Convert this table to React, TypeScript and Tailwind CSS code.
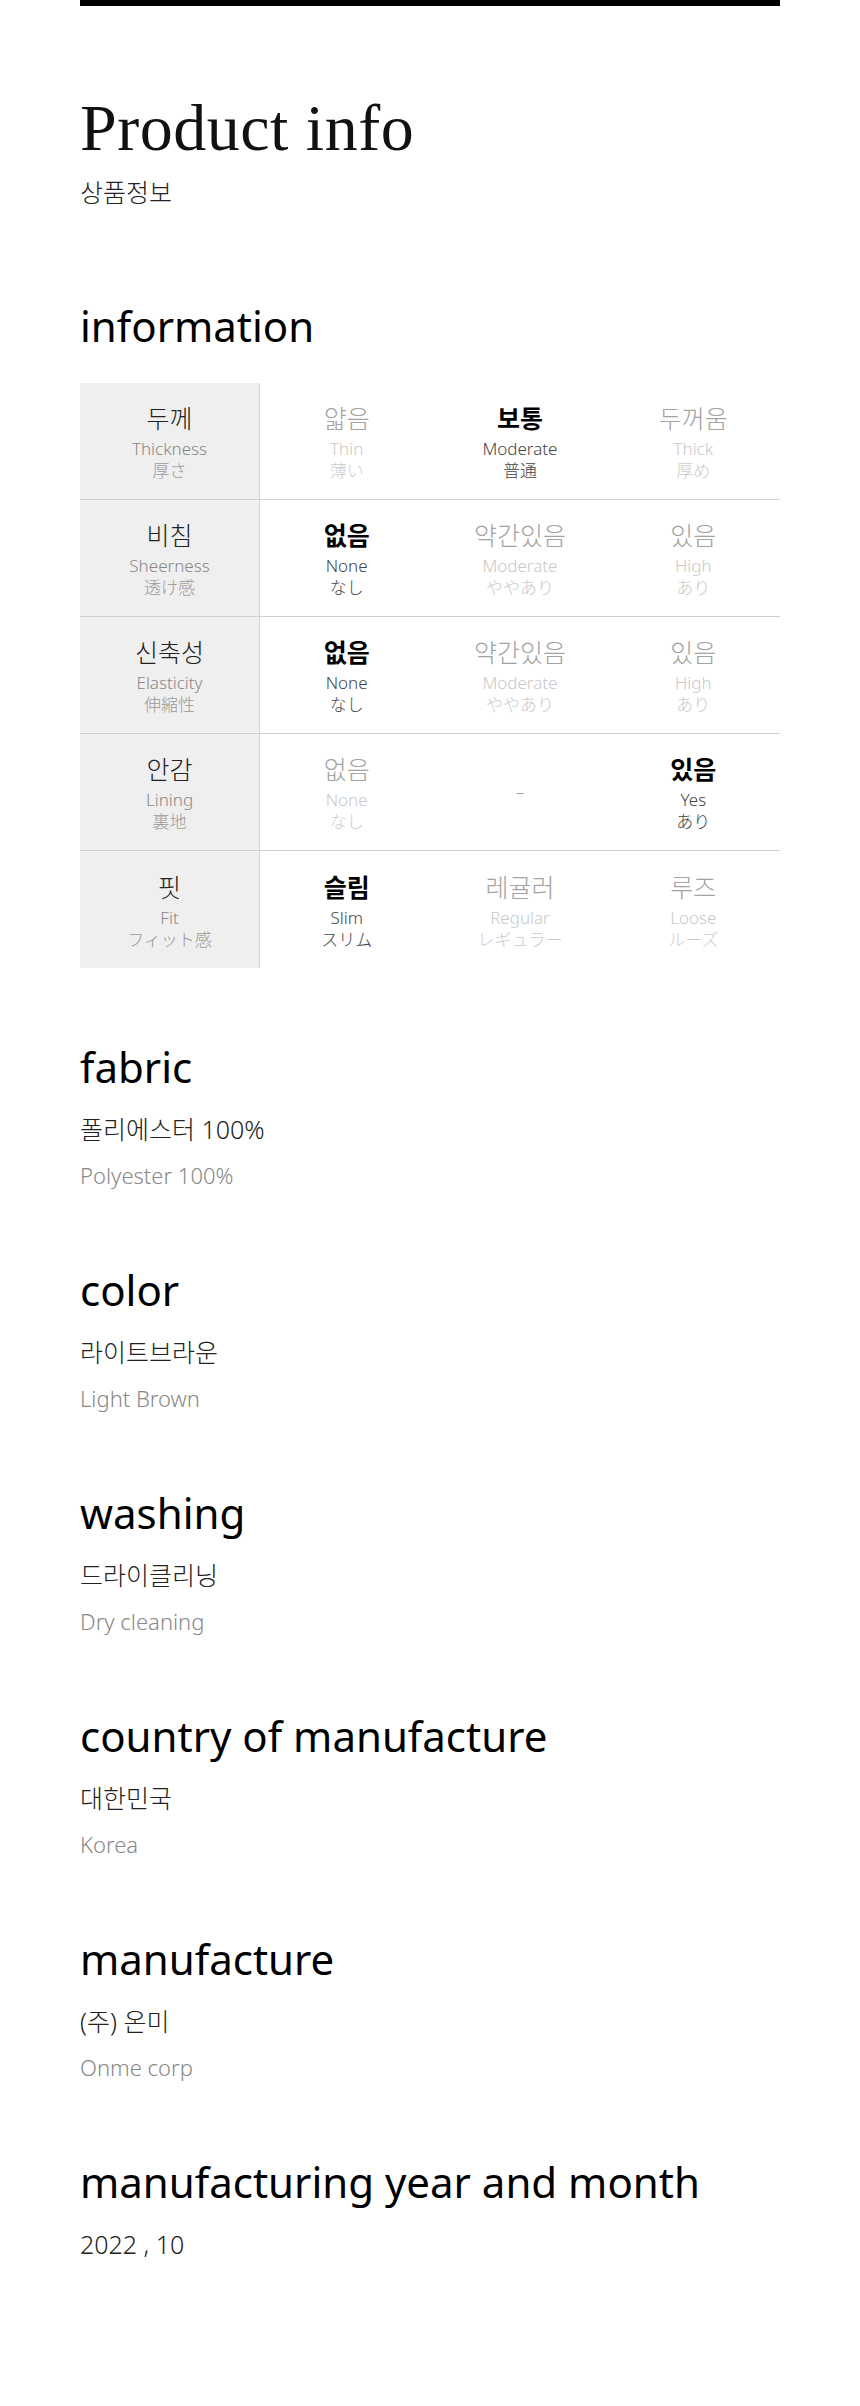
import React from "react"

// 상품정보 — 두께/비침/신축성/안감/핏 표 + 소재/색상/세탁/제조 정보.

type Option = { ko: string; en: string; ja: string; on?: boolean } | null

interface SpecRow {
  ko: string
  en: string
  ja: string
  options: Option[]
}

const SANS = "font-['Noto_Sans','Noto_Sans_CJK_KR','Noto_Sans_CJK_JP',sans-serif]"
const JA = "font-['Noto_Sans','Noto_Sans_CJK_JP',sans-serif]"

const ROWS: SpecRow[] = [
  {
    ko: "두께",
    en: "Thickness",
    ja: "厚さ",
    options: [
      { ko: "얇음", en: "Thin", ja: "薄い" },
      { ko: "보통", en: "Moderate", ja: "普通", on: true },
      { ko: "두꺼움", en: "Thick", ja: "厚め" },
    ],
  },
  {
    ko: "비침",
    en: "Sheerness",
    ja: "透け感",
    options: [
      { ko: "없음", en: "None", ja: "なし", on: true },
      { ko: "약간있음", en: "Moderate", ja: "ややあり" },
      { ko: "있음", en: "High", ja: "あり" },
    ],
  },
  {
    ko: "신축성",
    en: "Elasticity",
    ja: "伸縮性",
    options: [
      { ko: "없음", en: "None", ja: "なし", on: true },
      { ko: "약간있음", en: "Moderate", ja: "ややあり" },
      { ko: "있음", en: "High", ja: "あり" },
    ],
  },
  {
    ko: "안감",
    en: "Lining",
    ja: "裏地",
    options: [
      { ko: "없음", en: "None", ja: "なし" },
      null,
      { ko: "있음", en: "Yes", ja: "あり", on: true },
    ],
  },
  {
    ko: "핏",
    en: "Fit",
    ja: "フィット感",
    options: [
      { ko: "슬림", en: "Slim", ja: "スリム", on: true },
      { ko: "레귤러", en: "Regular", ja: "レギュラー" },
      { ko: "루즈", en: "Loose", ja: "ルーズ" },
    ],
  },
]

const DETAILS: { title: string; ko: string; en?: string }[] = [
  { title: "fabric", ko: "폴리에스터 100%", en: "Polyester 100%" },
  { title: "color", ko: "라이트브라운", en: "Light Brown" },
  { title: "washing", ko: "드라이클리닝", en: "Dry cleaning" },
  { title: "country of manufacture", ko: "대한민국", en: "Korea" },
  { title: "manufacture", ko: "(주) 온미", en: "Onme corp" },
  { title: "manufacturing year and month", ko: "2022 , 10" },
]

function Cell({ ko, en, ja, tone }: { ko: string; en: string; ja: string; tone: "head" | "on" | "off" }) {
  const koCls =
    tone === "on" ? "font-bold text-black" : tone === "head" ? "font-light text-[#222]" : "font-light text-[#a3a3a3]"
  const enCls = tone === "on" ? "text-[#444]" : tone === "head" ? "text-[#888]" : "text-[#c8c8c8]"
  const jaCls = tone === "on" ? "text-[#444]" : tone === "head" ? "text-[#999]" : "text-[#cccccc]"
  return (
    <div className="flex flex-col items-center text-center">
      <p className={`text-[25px] leading-[36px] ${koCls}`}>{ko}</p>
      <p className={`mt-[2px] text-[17px] font-light leading-[22px] ${enCls}`}>{en}</p>
      <p className={`${JA} text-[17px] font-light leading-[22px] ${jaCls}`}>{ja}</p>
    </div>
  )
}

export default function App() {
  return (
    <div className={`${SANS} min-h-[2406px] bg-white px-[80px] text-black`}>
      <div className="h-[6px] bg-black" />

      <h1 className="mt-[89px] font-['Liberation_Serif',serif] text-[66px] font-normal leading-none tracking-[0.5px] text-[#111]">
        Product info
      </h1>
      <p className="mt-[13px] text-[25px] font-light leading-[36px] text-[#222]">상품정보</p>

      <h2 className="mt-[91px] text-[42px] font-normal leading-[50px]">information</h2>

      <div className="mt-[32px]">
        {ROWS.map((row, i) => (
          <div
            key={row.en}
            className={[
              "flex h-[117px]",
              i < ROWS.length - 1 ? "border-b border-[#cfcfcf]" : "",
            ].join(" ")}
          >
            <div className="flex w-[180px] shrink-0 items-center justify-center border-r border-[#d4d4d4] bg-[#efefef]">
              <Cell ko={row.ko} en={row.en} ja={row.ja} tone="head" />
            </div>
            <div className="grid flex-1 grid-cols-3">
              {row.options.map((opt, j) => (
                <div key={j} className="flex items-center justify-center">
                  {opt ? (
                    <Cell ko={opt.ko} en={opt.en} ja={opt.ja} tone={opt.on ? "on" : "off"} />
                  ) : (
                    <span className="text-[17px] font-light text-[#999]">–</span>
                  )}
                </div>
              ))}
            </div>
          </div>
        ))}
      </div>

      <div className="mt-[74px] flex flex-col gap-[75px] pb-[140px]">
        {DETAILS.map((d) => (
          <section key={d.title}>
            <h3 className="text-[42px] font-normal leading-[50px]">{d.title}</h3>
            <p className="mt-[20px] text-[25px] font-light leading-[34px] text-[#222]">{d.ko}</p>
            {d.en && <p className="mt-[14px] text-[22px] font-light leading-[30px] text-[#888]">{d.en}</p>}
          </section>
        ))}
      </div>
    </div>
  )
}
